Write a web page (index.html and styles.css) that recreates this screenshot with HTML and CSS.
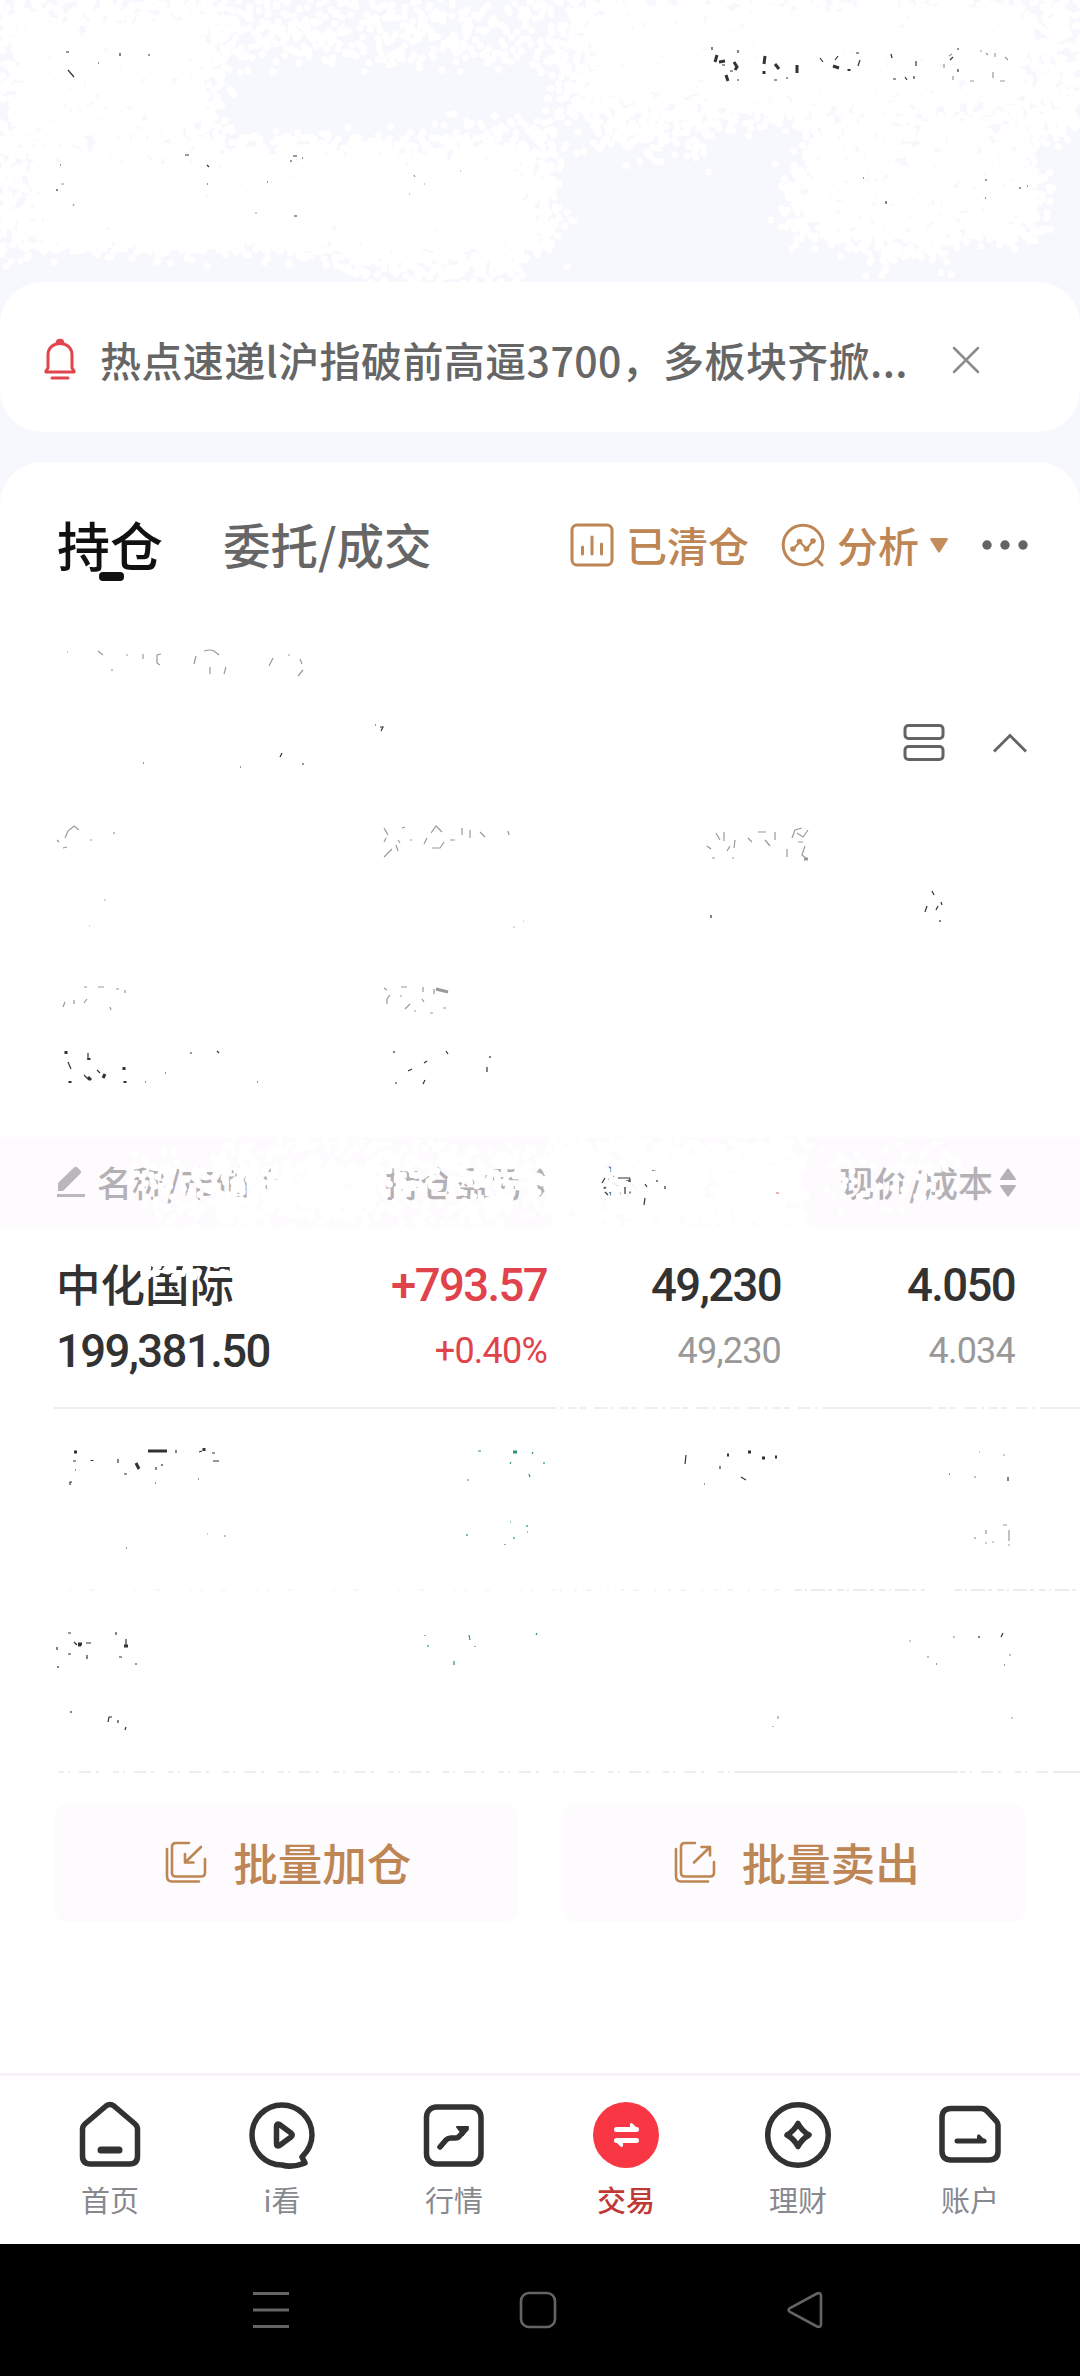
FILE: index.html
```html
<!DOCTYPE html>
<html lang="zh-CN">
  <head>
    <meta charset="UTF-8" />
    <meta name="viewport" content="width=device-width, initial-scale=1.0" />
    <title>交易</title>
    <link rel="stylesheet" href="styles.css">
  </head>
  <body>
    <div class="page">
      <div class="account">
        <svg width="1080" height="282" viewBox="0 0 1080 282">
          <path class="spray" id="accountSpray" />
          <path class="speck dark" d="M66 52h3M68 70l6 7M98 63h1M120 53v3M148 55h2M185 155h4M207 165l2 2M207 184h1M267 182h1M293 156h4M302 158h1M290 161h2M294 216h3M60 165h1M57 189v2M863 178h1M886 201v3M985 180h2M985 198h1M1019 188h2M1027 186h1" />
          <path class="speck dark bold" d="M717 55l-2 7M719 62l6-1M734 62l3 5l-2 3M726 75l2 6M765 56l-1 8M764 71v3M775 64l4 5M797 65v8M833 66l6 2M849 69v2" />
          <path class="speck dark" d="M712 47v3M738 50v3M722 65h3M737 80h2M730 71h3M774 80h3M786 78h2M820 58l3 4M838 56l-3 4M856 53h3M860 60l-2 6M891 54l1 4M905 77l2 3M893 79h3M916 61v5M914 76v3M957 49h2M958 69v3M950 60l3-3" />
          <path class="speck gray" d="M944 64v4M980 51h2M986 53l2 2M995 53v4M1005 57l3 3M953 76v4M970 81h4M1000 81h5M993 72v6M952 54l-3 2M61 184h3M414 175l1 2M424 184h1M409 194h1M73 206l1-2M255 213h2M460 171h1" />
        </svg>
      </div>

      <div class="notice">
        <svg class="bell" width="36" height="46" viewBox="0 0 36 46" fill="none" stroke="#e0444c" stroke-width="3">
          <path d="M4 35V34l2-3V18C6 11 11 6.500 18 6.500S30 11 30 18v13l2 3v1z" stroke-linejoin="round" />
          <path d="M15 7c0-5 6-5 6 0" />
          <path d="M10 41h16" stroke-linecap="round" />
        </svg>
        <div class="notice-text">热点速递l沪指破前高逼3700，多板块齐掀...</div>
        <svg width="28" height="28" viewBox="0 0 28 28" stroke="#8c8c8c" stroke-width="2.500" stroke-linecap="round">
          <path d="M2 2l24 24M26 2L2 26" />
        </svg>
      </div>

      <div class="panel">
        <div class="tabs">
          <div class="tab active">持仓<span class="line"></span></div>
          <div class="tab second">委托/成交</div>
          <div class="link cleared">
            <svg width="44" height="44" viewBox="0 0 44 44" fill="none" stroke="#bd8654" stroke-width="3" stroke-linecap="round">
              <rect x="2" y="2" width="40" height="40" rx="5" />
              <path d="M12.500 24v7M22 14v17M31.500 21v10" />
            </svg>
            <span>已清仓</span>
          </div>
          <div class="link analysis">
            <svg width="44" height="44" viewBox="0 0 44 44" fill="none" stroke="#bd8654" stroke-width="3" stroke-linecap="round" stroke-linejoin="round">
              <circle cx="22" cy="22" r="19.800" />
              <path d="M35 36l6 6" />
              <path d="M12 26l7-7l6.500 7L32 18" stroke-width="2.300" />
              <g fill="#bd8654" stroke="none"><circle cx="12" cy="26" r="2.800" /><circle cx="18.500" cy="18.500" r="2.800" /><circle cx="25.500" cy="26" r="2.800" /><circle cx="32" cy="18" r="2.800" /></g>
            </svg>
            <span>分析</span>
            <svg class="caret" width="18" height="15" viewBox="0 0 18 15"><path d="M1 0h16q1.500 .5 .5 2L10 14q-1 1.500-2 0L.5 2Q-.5 .5 1 0z" fill="#c68d5c" /></svg>
          </div>
          <svg class="dots" width="46" height="10" viewBox="0 0 46 10" fill="#646464">
            <circle cx="5" cy="5" r="4.700" /><circle cx="23" cy="5" r="4.700" /><circle cx="41" cy="5" r="4.700" />
          </svg>
        </div>

        <div class="summary">
          <svg class="marks" width="1080" height="509" viewBox="0 628 1080 509">
            <path class="speck gray" d="M67 652h1M98 651l5 4M112 669v2M126 655h2M143 654v5M161 654l-4 1v8l3 2M196 656l-2 8M204 651q6-2 10 0l5 4M210 667v7M226 667l-2 7M269 666l4-8M288 655h2M300 659l2 5M303 670l-5 6" />
            <path class="speck dark" d="M375 725h1M380 727h3l-2 4M302 764h2M240 767h1M143 763h1M282 753l-2 4M711 915v3M932 891l2 4M941 902l1 3M925 912l2-6M938 906l-2 4M940 920v2" />
            <path class="speck gray" d="M57 840l2 2M65 838l3-7l6-5l5 4M63 848l4-1M114 832v2M90 840h2M384 828l4 7M402 828l3-1M386 838l-2 4M384 857l8-8M398 840l2 3M396 845l2 6M410 840h2M431 833l5-7l6 6M427 838l-3 6M432 848h8l4-6M450 840h5M462 828v7M470 830v8M480 832l5 5M508 831l1 4M707 846l4 3M716 833l4 7M724 832v9M727 851l3-5M735 840l-1 8M748 838l4 4M758 832h8M765 840l5 6M775 832v8M787 849v8M792 838l3-8l7-2M797 833l6 4l5-7M798 842h5M805 846l-3 9l5 4M712 858h3M732 858h2" />
            <path class="speck gray" d="M63 1007l2-5M84 987h3M98 987h6M74 1004v-4M84 1003l3-4M110 1007l1 3M125 990v3M116 989h3M384 988l3 2M401 987h6M423 987v5M434 989v5M387 1004v-5l3-4M400 996h2M405 1009l5-5M422 999l2 3M430 1013h3M443 1008h3M414 1011h2" />
            <path class="speck gray bold" d="M436 989l12 3M804 859h4" />
            <path class="speck dark bold" d="M66 1051v3M89 1058v2M70 1081v2M88 1077l3 3M105 1074l-2 4M124 1067v3M125 1081v2" />
            <path class="speck dark" d="M88 1053v7M68 1062l3 7M97 1070l3 3M84 1075l5 5M165 1073h1M145 1082h1M190 1053h2M217 1051l2 2M257 1082h1M394 1051v2M395 1083h2M425 1080l-2 4M446 1051l2 3M427 1061l-3 2M412 1069l-4 2M490 1056v2M487 1067v5" />
            <path d="M105 899v2M89 926h1" stroke="#8fc4b0" />
            <path d="M523 921h1M514 928v-2" stroke="#e8a5a8" />
          </svg>
          <div class="tools">
            <svg width="42" height="40" viewBox="0 0 42 40" fill="none" stroke="#646464" stroke-width="3">
              <rect x="2" y="2.500" width="38" height="13" rx="3.500" />
              <rect x="2" y="23.500" width="38" height="13" rx="3.500" />
            </svg>
            <svg width="34" height="20" viewBox="0 0 34 20" fill="none" stroke="#646464" stroke-width="2.800"><path d="M1 18.500L17 2.500l16 16" /></svg>
          </div>
        </div>

        <div class="table-head">
          <div class="cell name">
            <svg width="28" height="32" viewBox="0 0 28 32" fill="#b9b7ba"><path d="M1 17L17 1.500q2-1.500 4 .5l2.500 2.500q1.500 1.500 0 3L6 25H1zM0 28h28v3H0z" /></svg>
            名称/市值
            <svg class="sort" width="16" height="29" viewBox="0 0 16 29" fill="#b3b1b4"><path d="M7 1q1-1 2 0l7 10q0 1-1 1H1q-1 0-1-1zM1 17h14q1 0 1 1L9 28q-1 1-2 0L0 18q0-1 1-1z" /></svg>
          </div>
          <div class="cell">持仓盈亏
            <svg class="sort" width="16" height="29" viewBox="0 0 16 29" fill="#b3b1b4"><path d="M7 1q1-1 2 0l7 10q0 1-1 1H1q-1 0-1-1zM1 17h14q1 0 1 1L9 28q-1 1-2 0L0 18q0-1 1-1z" /></svg>
          </div>
          <div class="cell third">持仓</div>
          <div class="cell">现价/成本
            <svg class="sort" width="16" height="29" viewBox="0 0 16 29" fill="#b3b1b4"><path d="M7 1q1-1 2 0l7 10q0 1-1 1H1q-1 0-1-1zM1 17h14q1 0 1 1L9 28q-1 1-2 0L0 18q0-1 1-1z" /></svg>
          </div>
          <svg class="cover" width="1080" height="90" viewBox="0 0 1080 90">
            <path class="spray" id="headSpray" />
            <path class="speck dark" d="M602 46l3-5M618 41h12M625 50v7M605 55l3 3M645 47l2 3M645 61l-1 7M657 43v2M665 49v3" />
            <path d="M776 56h3" stroke="#d66" />
          </svg>
        </div>

        <div class="stock">
          <div class="cell name">中化国际</div>
          <div class="cell big red">+793.57</div>
          <div class="cell big">49,230</div>
          <div class="cell big">4.050</div>
          <div class="cell name big">199,381.50</div>
          <div class="cell small red">+0.40%</div>
          <div class="cell small">49,230</div>
          <div class="cell small">4.034</div>
          <svg class="cover" width="200" height="60" viewBox="0 0 200 60"><path class="spray" id="nameSpray" /></svg>
        </div>

        <svg class="rest" width="1080" height="397" viewBox="0 1407 1080 397">
          <path d="M54 1408H556M825 1408H930M1040 1408H1080M734 1772H958M1053 1772H1080" stroke="#ededed" stroke-width="2" />
          <path d="M560 1408H825M930 1408H1040" stroke="#efefef" stroke-width="2" stroke-dasharray="3 5 9 3 6 8 13 4" />
          <path d="M58 1590H560" stroke="#f8f8f8" stroke-width="2" stroke-dasharray="2 8 3 18 5 30" />
          <path d="M560 1590H795" stroke="#f4f4f4" stroke-width="2" stroke-dasharray="2 12 3 9 6 15" />
          <path d="M795 1590H925M955 1590H1080" stroke="#ececec" stroke-width="2" stroke-dasharray="7 3 2 4 14 3 4 5" />
          <path d="M58 1772H734M960 1772H1053" stroke="#eee" stroke-width="2" stroke-dasharray="6 4 2 9 12 5 3 14" />
          <path class="speck dark bold" d="M74 1452h3M148 1451h19M136 1463l3 6M92 1460v1M204 1448v3M727 1455h2M748 1452h3M762 1458h3M775 1457h2M78 1645h3M78 1644h4M124 1646h4" />
          <path class="speck dark" d="M73 1461h3M70 1485v-3h2M124 1474h3M118 1459v4M156 1470v-3M162 1464v2M176 1450v3M202 1451l-3 1M212 1453h3M213 1461h6M198 1479h1M155 1483h1M75 1470h1M686 1455l-1 9M720 1466v3M741 1477l5 3M704 1484h1M949 1474h1M1008 1477v4M68 1633h3M57 1650v-3M74 1642l3 3M86 1643h5M87 1659v-4M68 1654h3M119 1657h3M126 1639v6M116 1632v3M58 1668v-2M135 1664h2M1003 1633l-2 4M979 1636v2M71 1711v2M108 1722l1-5h3M118 1720v3M126 1727l-1 3M936 1664h1M1004 1665h1M126 1548h1" />
          <path class="speck gray" d="M979 1452h1M1003 1455h2M975 1476v2M986 1530v4M1003 1525h4M1009 1530v11M975 1537v2M985 1543h2M992 1542h2M1008 1545h2M778 1716v3M773 1726v1M1011 1718h2M909 1641h2M954 1636v2M928 1656v2M1010 1654v2M207 1534h1M225 1535v2" />
          <path class="speck green bold" d="M513 1452h4" />
          <path class="speck green" d="M467 1480h2M478 1451h3M533 1452l-1 2M510 1464l1-2M529 1474l1 3M544 1462v2M467 1534v2M510 1522h1M527 1525v2M527 1532h1M514 1537v2M505 1545v-1M469 1635l1 5M428 1645v2M454 1661v4M536 1635l1-2M475 1647v-1M425 1635v1" />
        </svg>

        <div class="actions">
          <div class="action">
            <svg width="42" height="42" viewBox="0 0 42 42" fill="none" stroke="#bd8654" stroke-width="2.600" stroke-linecap="round" stroke-linejoin="round">
              <path d="M24 2H11Q7 2 7 6v26q0 3.500 4 3.500h25q4 0 4-4V18" /><path d="M2 8v27q0 5.500 5 5.500h27" /><path d="M36 6L20 21.500M20 13v8.500h8.500" />
            </svg>
            批量加仓
          </div>
          <div class="action">
            <svg width="42" height="42" viewBox="0 0 42 42" fill="none" stroke="#bd8654" stroke-width="2.600" stroke-linecap="round" stroke-linejoin="round">
              <path d="M21 2H11Q7 2 7 6v26q0 3.500 4 3.500h25q4 0 4-4V21" /><path d="M2 8v27q0 5.500 5 5.500h27" /><path d="M20 21.500L36 6M27.500 6H36v8.500" />
            </svg>
            批量卖出
          </div>
        </div>
      </div>

      <div class="tabbar">
        <div class="item">
          <svg width="68" height="68" viewBox="0 0 68 68" fill="none" stroke="#323232" stroke-width="5.500" stroke-linejoin="round">
            <path d="M30 5q4-3 8 0L58.500 22.500Q61.500 25 61.500 28V55q0 8-8 8h-39q-8 0-8-8V28q0-3 3-5.500z" /><path d="M25 49h18" stroke-width="7" stroke-linecap="round" />
          </svg>
          <span>首页</span>
        </div>
        <div class="item">
          <svg width="68" height="68" viewBox="0 0 68 68" fill="none" stroke="#323232" stroke-width="5.500" stroke-linejoin="round">
            <path d="M54 56Q64 46 64 34A30 30 0 1 0 34 64Q44 67 57 62z" /><path d="M28.500 25q0-3 3-1.500L43 32q2.500 2 0 4L31.500 44.500q-3 1.500-3-1.500z" />
          </svg>
          <span>i看</span>
        </div>
        <div class="item">
          <svg width="68" height="68" viewBox="0 0 68 68" fill="none" stroke="#323232" stroke-width="5.500" stroke-linejoin="round">
            <rect x="6.500" y="6" width="54.500" height="57" rx="10" /><path d="M20 46l6-7q2-2 5-2h5q2 0 3.500-2L46 28" stroke-linecap="round" /><path d="M37 26h11l-5 8z" fill="#323232" stroke-width="2" />
          </svg>
          <span>行情</span>
        </div>
        <div class="item current">
          <svg width="68" height="68" viewBox="0 0 68 68">
            <circle cx="34" cy="34" r="33" fill="#f93643" /><path d="M24.500 28.500h20M24.500 39.500h20" stroke="#fff" stroke-width="5" stroke-linecap="round" /><path d="M38 27v-4q1-2 3 0l6 6zM31 41v4q-1 2-3 0l-6-6z" fill="#fff" />
          </svg>
          <span>交易</span>
        </div>
        <div class="item">
          <svg width="68" height="68" viewBox="0 0 68 68" fill="none" stroke="#323232" stroke-width="5.500" stroke-linejoin="round">
            <circle cx="34" cy="34" r="30.300" /><path d="M34 22.500q4 7.500 11 11.500q-7 4-11 11.500q-4-7.500-11-11.500q7-4 11-11.500z" />
          </svg>
          <span>理财</span>
        </div>
        <div class="item">
          <svg width="68" height="68" viewBox="0 0 68 68" fill="none" stroke="#323232" stroke-width="5.500" stroke-linejoin="round">
            <path d="M15 7.500H45q3.500 0 6 2.500l8 8.500q3 3 3 6V50q0 9-9 9H15q-9 0-9-9V16.500q0-9 9-9z" /><path d="M21 40h27" stroke-width="5" stroke-linecap="round" /><path d="M41 40v-5q1-3 3-1l7 7z" fill="#323232" stroke="none" />
          </svg>
          <span>账户</span>
        </div>
      </div>

      <div class="sysbar">
        <svg width="38" height="38" viewBox="0 0 38 38" stroke="#646464" stroke-width="3"><path d="M1 2.500h36M1 19h36M1 35.500h36" /></svg>
        <svg width="38" height="38" viewBox="0 0 38 38" fill="none" stroke="#646464" stroke-width="2.600"><rect x="2" y="2" width="34" height="34" rx="8" /></svg>
        <svg width="38" height="38" viewBox="0 0 38 38" fill="none" stroke="#646464" stroke-width="2.600"><path d="M31 2.500q4-1.500 4 2.500v28q0 4-4 2.500L4 21q-3-2 0-4z" /></svg>
      </div>
    </div>
    <script src="spray.js"></script>
  </body>
</html>
```

FILE: styles.css
```css
  body {
    font-family: "Noto Sans CJK SC", sans-serif;
    margin: 0;
    padding: 0;
    background-color: #f7f7fe;
  }

  svg {
    display: block;
    flex: none;
  }

  .page {
    width: 1080px;
    height: 2376px;
    display: flex;
    flex-direction: column;
    overflow: hidden;
  }

  .account {
    height: 282px;
  }

  .spray {
    fill: none;
    stroke: #ffffff;
    stroke-width: 7;
    stroke-linecap: round;
  }

  .speck {
    fill: none;
    stroke-width: 1.2;
  }
  .dark { stroke: #333333; }
  .gray { stroke: #999999; }
  .green { stroke: #2f9468; }
  .bold { stroke-width: 3; }

  .notice {
    height: 150px;
    box-sizing: border-box;
    padding: 6px 0 0 42px;
    margin-bottom: 30px;
    background-color: #ffffff;
    border-radius: 42px;
    display: flex;
    align-items: center;
  }

  .notice-text {
    width: 830px;
    margin-left: 22px;
    margin-right: 22px;
    margin-top: -2px;
    font-size: 41px;
    letter-spacing: 0.4px;
    line-height: 60px;
    font-weight: 500;
    color: #666666;
    white-space: nowrap;
  }

  .panel {
    flex: 1;
    background-color: #ffffff;
    border-radius: 42px 42px 0 0;
    overflow: hidden;
  }

  .tabs {
    height: 166px;
    padding: 0 52px 0 57px;
    display: flex;
    align-items: center;
  }

  .tab {
    position: relative;
    margin-top: -3px;
    white-space: nowrap;
  }

  .active {
    font-size: 53px;
    line-height: 60px;
    font-weight: 500;
    color: #111111;
  }

  .active .line {
    position: absolute;
    left: 42px;
    bottom: -7px;
    width: 25px;
    height: 9px;
    border-radius: 4px;
    background-color: #111111;
  }

  .second {
    margin-left: 60px;
    width: 347px;
    font-size: 47.500px;
    line-height: 60px;
    font-weight: 500;
    color: #666666;
  }

  .link {
    display: flex;
    align-items: center;
    gap: 12px;
    font-size: 41px;
    line-height: 60px;
    font-weight: 500;
    color: #bd8654;
    white-space: nowrap;
  }

  .link span {
    margin-top: -3px;
  }

  .analysis {
    margin-left: 32px;
  }

  .caret {
    margin-left: -1px;
  }

  .dots {
    margin-left: auto;
  }

  .summary {
    height: 509px;
    display: grid;
  }

  .summary .marks,
  .summary .tools {
    grid-area: 1 / 1;
  }

  .tools {
    display: flex;
    align-items: center;
    justify-content: flex-end;
    align-self: start;
    gap: 48px;
    height: 40px;
    padding-top: 95px;
    padding-right: 53px;
  }

  .table-head {
    position: relative;
    height: 90px;
    padding-left: 57px;
    background-color: #fefbff;
    display: grid;
    grid-template-columns: 257px 234px 234px 234px;
    align-items: center;
  }

  .cell {
    display: flex;
    align-items: center;
    justify-content: flex-end;
    white-space: nowrap;
  }

  .cell.name {
    justify-content: flex-start;
  }

  .table-head .cell {
    gap: 7px;
    font-size: 35px;
    line-height: 50px;
    font-weight: 500;
    color: #b3b1b4;
  }

  .table-head .name {
    gap: 12px;
  }

  .table-head .third {
    color: #505050;
    padding-right: 110px;
  }

  .cover {
    position: absolute;
    left: 0;
    top: 0;
  }

  .stock {
    position: relative;
    height: 180px;
    box-sizing: border-box;
    padding: 25px 0 0 56px;
    display: grid;
    grid-template-columns: 257px 234px 234px 234px;
    grid-template-rows: 66px 66px;
    font-family: Roboto, "Noto Sans CJK SC", sans-serif;
    font-weight: 500;
    color: #323232;
  }

  .stock .name {
    font-size: 44.500px;
    padding-bottom: 5px;
  }

  .stock .big {
    font-size: 45.500px;
    letter-spacing: -1.600px;
    padding-bottom: 0;
  }

  .stock .small {
    font-size: 36px;
    letter-spacing: -0.800px;
    color: #999999;
    font-weight: 400;
  }

  .stock .red {
    color: #e0434b;
  }

  .stock .cover {
    left: 100px;
    top: 25px;
  }

  .actions {
    display: flex;
    gap: 47px;
    padding: 0 55px;
  }

  .action {
    width: 462px;
    height: 118px;
    box-sizing: border-box;
    padding: 0 0 3px 5px;
    border-radius: 12px;
    background-color: #fefbff;
    display: flex;
    align-items: center;
    justify-content: center;
    gap: 26px;
    font-size: 44.500px;
    font-weight: 500;
    color: #bd8654;
  }

  .tabbar {
    height: 171px;
    box-sizing: border-box;
    padding: 25px 24px 0;
    border-top: 3px solid #f6f2f7;
    background-color: #ffffff;
    display: grid;
    grid-template-columns: repeat(6, 172px);
    align-items: start;
  }

  .item {
    display: flex;
    flex-direction: column;
    align-items: center;
    gap: 9px;
    font-size: 29px;
    line-height: 42px;
    color: #88888f;
  }

  .current {
    color: #c03a35;
    font-weight: 500;
  }

  .sysbar {
    height: 132px;
    box-sizing: border-box;
    padding: 0 256px 0 252px;
    background-color: #000000;
    display: flex;
    align-items: center;
    justify-content: space-between;
  }
```

FILE: spray.js
```js
// seeded so the texture is the same on every load
let seed = 7;
function rnd() {
  seed = (seed * 16807) % 2147483647;
  return seed / 2147483647;
}

// areas: [x, y, width, height, coverage, soft edge]
function spray(id, areas) {
  let d = "";
  areas.forEach(([x, y, w, h, k, soft]) => {
    const count = (w * h * k) / 38;
    for (let i = 0; i < count; i++) {
      const px = x + rnd() * w + (rnd() + rnd() - 1) * soft;
      const py = y + rnd() * h + (rnd() + rnd() - 1) * soft;
      d += `M${px.toFixed(1)} ${py.toFixed(1)}h0`;
    }
  });
  document.getElementById(id).setAttribute("d", d);
}

spray("accountSpray", [
  [0, 0, 225, 150, 2, 24],
  [20, 20, 170, 110, 1.8, 12],
  [225, 0, 330, 62, 0.8, 24],
  [565, 0, 515, 120, 2, 26],
  [600, 10, 420, 90, 2, 14],
  [600, 120, 110, 32, 1.2, 22],
  [0, 150, 555, 100, 2.2, 24],
  [40, 160, 480, 85, 3, 12],
  [230, 136, 190, 20, 1.2, 14],
  [440, 118, 120, 40, 0.8, 16],
  [340, 240, 180, 38, 1.5, 14],
  [785, 165, 255, 65, 1.3, 24],
  [810, 120, 225, 120, 2.4, 20],
  [860, 240, 90, 22, 1.2, 18],
  [1030, 110, 50, 30, 1, 16],
]);

spray("headSpray", [
  [130, 20, 130, 62, 0.7, 14],
  [220, 8, 160, 78, 0.9, 12],
  [380, 10, 200, 76, 0.9, 12],
  [560, 5, 240, 85, 2.2, 14],
  [820, 10, 140, 60, 0.3, 12],
  [270, 30, 100, 40, 2, 4],
  [548, 20, 46, 50, 2.5, 4],
  [640, 30, 60, 45, 3, 4],
]);

spray("nameSpray", [
  [52, 2, 78, 22, 1, 4],
  [46, 2, 30, 14, 1, 4],
  [30, 8, 22, 16, 0.6, 3],
]);
```
